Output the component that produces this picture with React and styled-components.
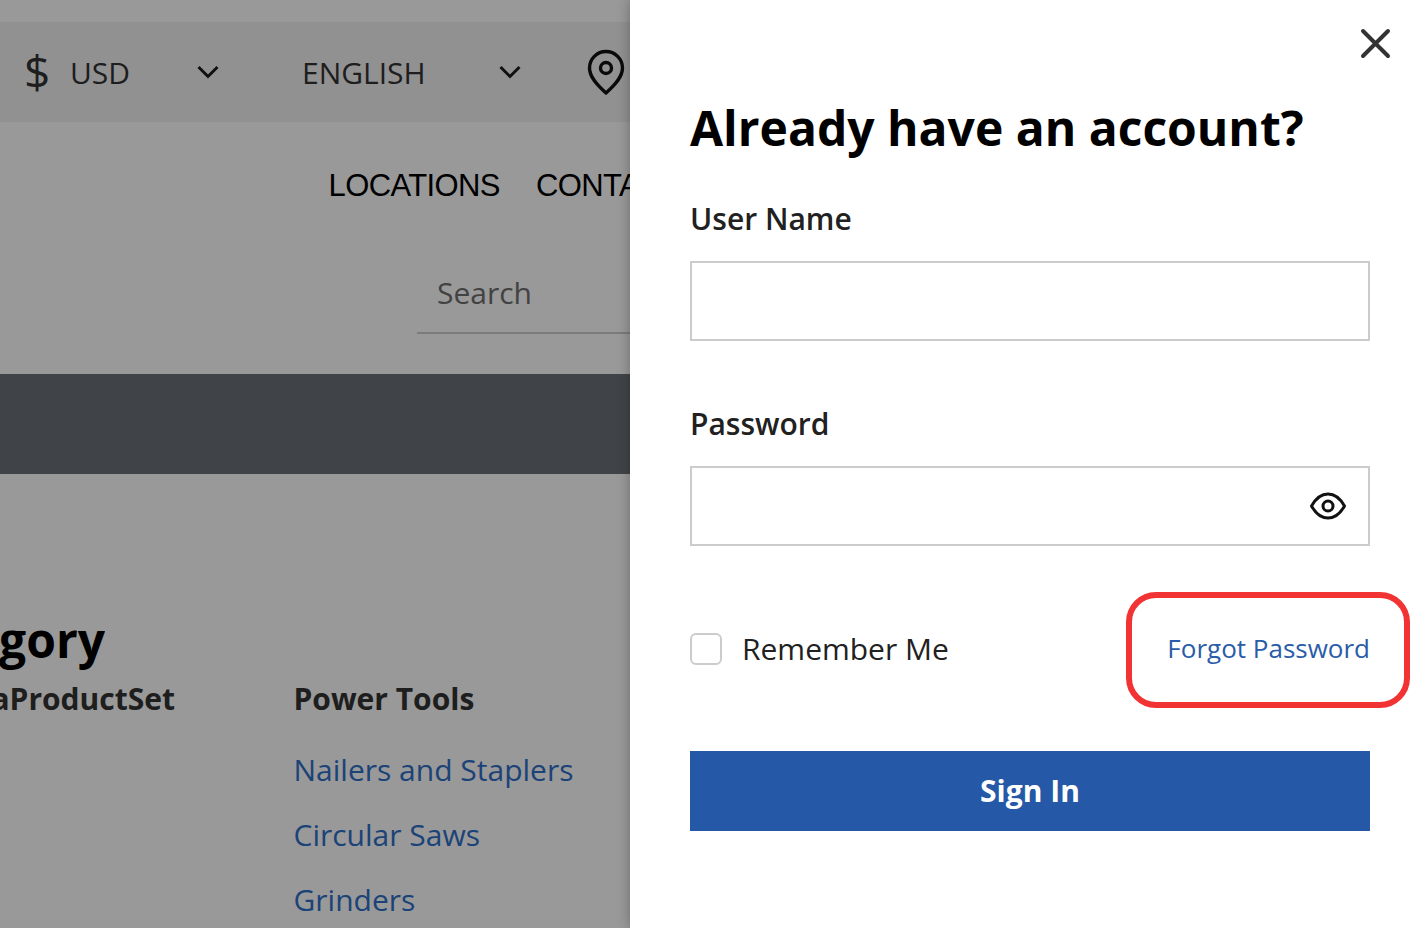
import React from 'react';
import styled, {createGlobalStyle} from 'styled-components';

const GlobalStyle = createGlobalStyle`
  html, body {
    margin: 0;
    height: 100%;
    overflow: hidden;
    background: #fff;
    font-family: "Open Sans", "Liberation Sans", sans-serif;
  }
  * { box-sizing: border-box; }
`;

const Screen = styled.div`
  position: relative;
  width: 1428px;
  height: 928px;
  overflow: hidden;
`;

const Page = styled.div`
  width: 1428px;
  height: 928px;
  padding-top: 22px;
  background: #fff;
`;

const UtilityBar = styled.div`
  display: flex;
  align-items: center;
  height: 100px;
  padding-left: 24px;
  background: #f2f2f2;
  color: #333;
  font-size: 30px;
`;

const Dollar = styled.span`
  width: 46px;
  padding-bottom: 2px;
  font-size: 46px;
  line-height: 1;
`;

const Picker = styled.div`
  display: flex;
  align-items: center;
  justify-content: space-between;
  width: ${p => p.$width}px;
  margin-right: ${p => p.$gap}px;
`;

const NavRow = styled.nav`
  display: flex;
  gap: 36px;
  height: 127px;
  padding: 46px 0 0 328.5px;
  font-family: "Liberation Sans", Arial, sans-serif;
  font-size: 31px;
  line-height: 36px;
  letter-spacing: -0.6px;
  color: #000;
`;

const SearchBox = styled.div`
  width: 600px;
  height: 85px;
  margin-left: 417px;
  padding: 24px 0 0 20px;
  border-bottom: 2px solid #cdcdcd;
  color: #6f6f6f;
  font-size: 30px;
  line-height: 40px;
`;

const Band = styled.div`
  height: 100px;
  margin-top: 40px;
  background: #6b7278;
`;

const Heading = styled.h2`
  display: flex;
  justify-content: flex-end;
  width: 105px;
  margin: 136px 0 0;
  overflow: hidden;
  white-space: nowrap;
  color: #000;
  font-size: 48px;
  line-height: 60px;
  font-weight: 700;
`;

const Columns = styled.div`
  display: flex;
  align-items: flex-start;
  margin-top: 9px;
`;

const ClippedTitle = styled.div`
  display: flex;
  justify-content: flex-end;
  width: 175px;
  margin-right: 118.5px;
  overflow: hidden;
  white-space: nowrap;
  color: #333;
  font-size: 30px;
  line-height: 40px;
  font-weight: 700;
`;

const LinkColumn = styled.div`
  display: flex;
  flex-direction: column;
  font-size: 30px;
  line-height: 40px;
`;

const ColumnTitle = styled.div`
  margin-bottom: 31px;
  color: #333;
  font-weight: 700;
`;

const CategoryLink = styled.a`
  margin-bottom: 25px;
  color: #3070c8;
  white-space: nowrap;
`;

const Overlay = styled.div`
  position: absolute;
  inset: 0;
  background: rgba(0, 0, 0, 0.4);
`;

const Drawer = styled.aside`
  position: absolute;
  top: 0;
  right: 0;
  bottom: 0;
  width: 798px;
  padding: 0 58px 0 60px;
  background: #fff;
  box-shadow: 0 0 12px rgba(0, 0, 0, 0.3);
`;

const CloseButton = styled.button`
  position: absolute;
  top: 26px;
  right: 36px;
  display: flex;
  width: 34px;
  height: 34px;
  padding: 0;
  border: 0;
  background: none;
`;

const Title = styled.h1`
  margin: 95px 0 0;
  color: #000;
  font-size: 48px;
  line-height: 66px;
  font-weight: 700;
`;

const Label = styled.label`
  display: block;
  margin-top: ${p => p.$top}px;
  color: #212121;
  font-size: 30px;
  line-height: 40px;
  font-weight: 600;
`;

const Field = styled.div`
  display: flex;
  align-items: center;
  justify-content: flex-end;
  width: 680px;
  height: 80px;
  margin-top: 22px;
  padding-right: 22px;
  border: 2px solid #ccc;
`;

const OptionsRow = styled.div`
  display: flex;
  align-items: center;
  justify-content: space-between;
  width: 680px;
  height: 40px;
  margin-top: 83px;
`;

const Remember = styled.div`
  display: flex;
  align-items: center;
  gap: 20px;
  color: #212121;
  font-size: 30px;
`;

const RememberText = styled.span`
  margin-bottom: 2px;
`;

const CheckBox = styled.span`
  width: 32px;
  height: 32px;
  border: 2px solid #ccc;
  border-radius: 6px;
`;

const ForgotLink = styled.a`
  position: relative;
  margin-bottom: 2px;
  color: #2a5ca8;
  font-size: 26px;
  line-height: 40px;
`;

const Highlight = styled.span`
  position: absolute;
  top: -36px;
  right: -40px;
  width: 284px;
  height: 116px;
  border: 6px solid #f13333;
  border-radius: 30px;
`;

const SignIn = styled.button`
  display: block;
  width: 680px;
  height: 80px;
  margin-top: 82px;
  padding: 0 0 2px;
  border: 0;
  background: #2558a6;
  color: #fff;
  font-family: inherit;
  font-size: 30px;
  font-weight: 700;
`;

const Chevron = () => (
  <svg width="22" height="14" viewBox="0 0 22 14" fill="none" stroke="#1c1c1c" strokeWidth="3">
    <path d="M1.5 2 11 11.5 20.5 2" />
  </svg>
);

const Pin = () => (
  <svg width="38" height="46" viewBox="0 0 38 46" fill="none" stroke="#111" strokeWidth="3.4">
    <path d="M19 44C10 36 2.500 28 2.500 19a16.500 16.500 0 0 1 33 0C35.500 28 28 36 19 44Z" strokeLinejoin="round" />
    <circle cx="19" cy="19" r="5.500" />
  </svg>
);

const Eye = () => (
  <svg width="36" height="28" viewBox="0 0 36 28" fill="none" stroke="#111" strokeWidth="3">
    <path d="M1.500 14C6 6 11.500 2 18 2s12 4 16.500 12C30 22 24.500 26 18 26S6 22 1.500 14Z" strokeLinejoin="round" />
    <circle cx="18" cy="14" r="5" />
  </svg>
);

const CloseIcon = () => (
  <svg width="34" height="34" viewBox="0 0 34 34" fill="none" stroke="#333" strokeWidth="4" strokeLinecap="round">
    <path d="M5 5 30 30M30 5 5 30" />
  </svg>
);

export default function App() {
  return (
    <Screen>
      <GlobalStyle />
      <Page>
        <UtilityBar>
          <Dollar>$</Dollar>
          <Picker $width={149} $gap={83}>USD <Chevron /></Picker>
          <Picker $width={219} $gap={66}>ENGLISH <Chevron /></Picker>
          <Pin />
        </UtilityBar>
        <NavRow>
          <span>LOCATIONS</span>
          <span>CONTACT</span>
        </NavRow>
        <SearchBox>Search</SearchBox>
        <Band />
        <Heading>Category</Heading>
        <Columns>
          <ClippedTitle>MetaProductSet</ClippedTitle>
          <LinkColumn>
            <ColumnTitle>Power Tools</ColumnTitle>
            <CategoryLink>Nailers and Staplers</CategoryLink>
            <CategoryLink>Circular Saws</CategoryLink>
            <CategoryLink>Grinders</CategoryLink>
          </LinkColumn>
        </Columns>
      </Page>
      <Overlay />
      <Drawer>
        <CloseButton><CloseIcon /></CloseButton>
        <Title>Already have an account?</Title>
        <Label $top={38}>User Name</Label>
        <Field />
        <Label $top={63}>Password</Label>
        <Field><Eye /></Field>
        <OptionsRow>
          <Remember><CheckBox /><RememberText>Remember Me</RememberText></Remember>
          <ForgotLink>Forgot Password<Highlight /></ForgotLink>
        </OptionsRow>
        <SignIn>Sign In</SignIn>
      </Drawer>
    </Screen>
  );
}
